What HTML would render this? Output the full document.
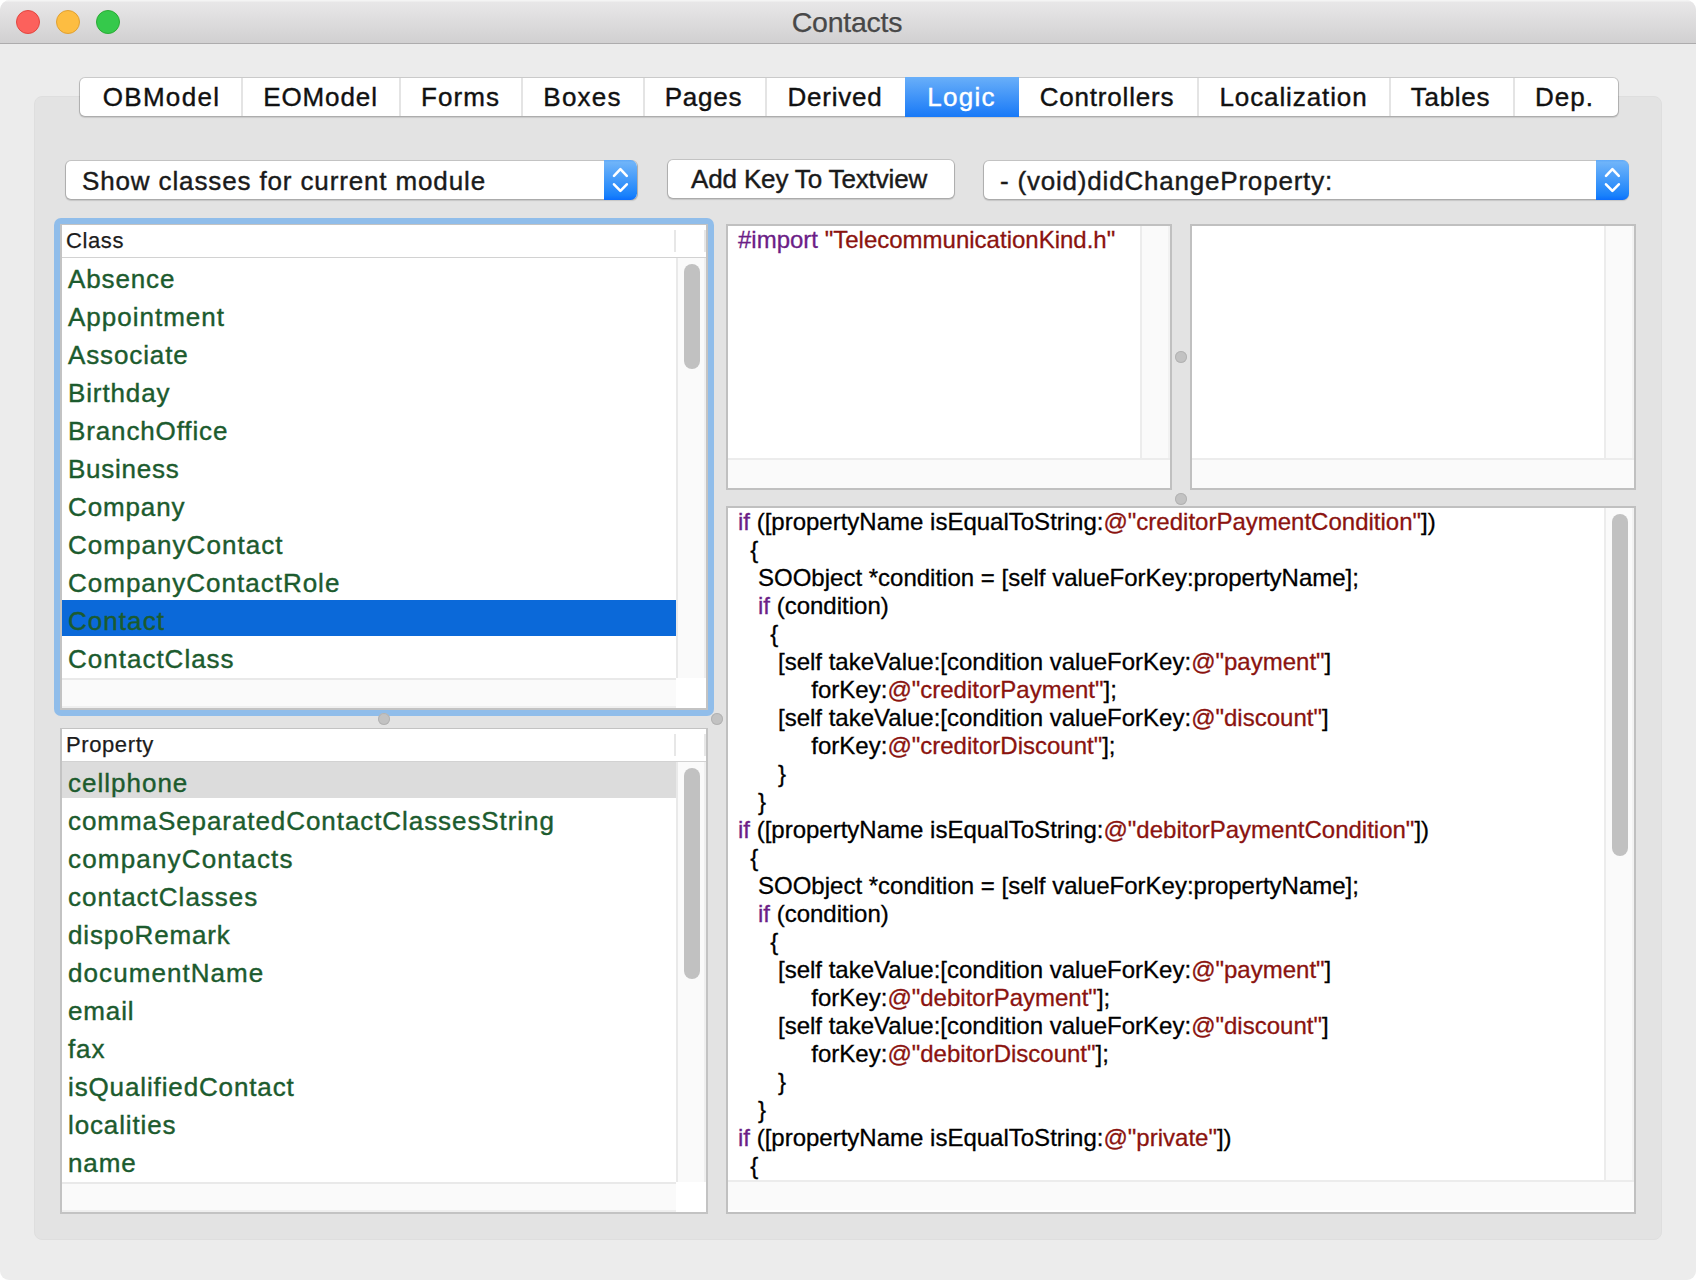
<!DOCTYPE html>
<html><head><meta charset="utf-8"><title>Contacts</title>
<style>
*{box-sizing:border-box;margin:0;padding:0}
html,body{width:1696px;height:1280px;overflow:hidden;background:#fff}
body{font-family:"Liberation Sans",sans-serif;position:relative;color:#000}
#win{position:absolute;left:0;top:0;width:1696px;height:1280px;background:#ececec;border-radius:10px 10px 9px 9px;overflow:hidden}
#titlebar{position:absolute;left:0;top:0;width:1696px;height:44px;background:linear-gradient(#f4f4f4 0,#f4f4f4 1px,#e8e7e8 2px,#d1d0d1 100%);border-bottom:1px solid #adacad}
#title{-webkit-text-stroke:.25px;position:absolute;left:0;width:1696px;top:7px;text-align:center;font-size:28.5px;line-height:30px;color:#484848;letter-spacing:-.25px;padding-right:2px}
.tl{position:absolute;top:10px;width:24px;height:24px;border-radius:50%}
#tabbox{position:absolute;left:34px;top:96px;width:1628px;height:1144px;background:#e3e3e3;border:1px solid #dedede;border-radius:8px}
#tabs{position:absolute;left:80px;top:78px;height:38px;width:1538px;background:#fff;border-radius:5px;box-shadow:0 0 0 1px rgba(0,0,0,.13),0 1px 1px 1px rgba(0,0,0,.12)}
.tab{-webkit-text-stroke:.4px;position:absolute;top:0;height:38px;font-size:26px;line-height:39px;text-align:center;white-space:pre;letter-spacing:.8px;color:#111;padding-right:3px}
.sep{position:absolute;top:0;width:2px;height:38px;background:#e4e4e4;margin-left:-1px}
.tab.sel{background:linear-gradient(#69aff9,#1879f7);color:#fff;top:-1px;height:40px;line-height:41px}
.popup{position:absolute;height:38px;-webkit-text-stroke:.4px;background:#fff;border-radius:5px;box-shadow:0 0 0 1px rgba(0,0,0,.13),0 1px 1px 1px rgba(0,0,0,.13);font-size:26px;line-height:40px;white-space:pre;letter-spacing:.8px;color:#1a1a1a}
.popup .cap{position:absolute;top:-1px;width:33px;height:40px;border-radius:0 6.5px 6.5px 0;background:linear-gradient(#5fa9f8,#6fb4f9 6%,#1a82fb 88%,#0b6efd)}
.popup .cap svg{position:absolute;left:0;top:0}
.ring{position:absolute;background:#90bdea;border-radius:7px}
.list{position:absolute;background:#fff;border:2px solid #c3c3c3;border-top:1px solid #c3c3c3;overflow:hidden}
.list .in{position:absolute;left:0;top:0;width:644px;height:483px}
.hdr{-webkit-text-stroke:.25px;position:absolute;left:4px;top:0;height:32px;font-size:22px;line-height:32px;white-space:pre;color:#1c1c1c;letter-spacing:.6px}
.hline{position:absolute;left:0;top:32px;width:644px;height:1px;background:#d2d2d2}
.hsep{position:absolute;top:5px;width:2px;height:22px;background:#e7e7e7}
.row{-webkit-text-stroke:.4px;position:absolute;left:0;width:614px;height:36px;font-size:26px;line-height:42px;color:#1c5b2e;white-space:pre;padding-left:6px;letter-spacing:.87px}
.vtrack{position:absolute;left:614px;top:33px;width:30px;height:420px;background:#fafafa;border-left:2px solid #e9e9e9;border-right:2px solid #efefef}
.htrack{position:absolute;left:0;top:453px;width:614px;height:30px;background:#fafafa;border-top:2px solid #e9e9e9;border-bottom:2px solid #efefef}
.thumb{position:absolute;background:#c1c1c1;border-radius:8px}
.code{-webkit-text-stroke:.3px;position:absolute;font-size:24px;line-height:28px;white-space:pre;color:#000}
.k{color:#6c1e87}.s{color:#8b130f}
.dimple{position:absolute;width:12px;height:12px;border-radius:50%;background:#c2c2c2;box-shadow:inset 0 0 0 1px #b3b3b3}
.tv{position:absolute;background:#fff;border:2px solid #c0c0c0;overflow:hidden}
</style></head><body>
<div id="win">
<div id="titlebar">
<div class="tl" style="left:16px;background:#fc615c;border:1px solid #e2463f"></div>
<div class="tl" style="left:56px;background:#fdbd41;border:1px solid #e0a032"></div>
<div class="tl" style="left:96px;background:#35c94b;border:1px solid #2bab35"></div>
<div id="title">Contacts</div>
</div>
<div id="tabbox"></div>
<div id="tabs">
<div class="tab" style="left:0px;width:162px;letter-spacing:1.3px;text-indent:4px">OBModel</div>
<div class="tab" style="left:162px;width:158px;letter-spacing:0.9px;text-indent:2px">EOModel</div>
<div class="tab" style="left:320px;width:122px;letter-spacing:1.05px;text-indent:2px">Forms</div>
<div class="tab" style="left:442px;width:122px;letter-spacing:1.2px;text-indent:2px">Boxes</div>
<div class="tab" style="left:564px;width:122px;letter-spacing:0.8px;text-indent:0px">Pages</div>
<div class="tab" style="left:686px;width:139px;letter-spacing:0.8px;text-indent:2px">Derived</div>
<div class="tab sel" style="left:825px;width:114px;letter-spacing:1.3px;text-indent:2px">Logic</div>
<div class="tab" style="left:939px;width:179px;letter-spacing:0.8px;text-indent:0px">Controllers</div>
<div class="tab" style="left:1118px;width:192px;letter-spacing:0.9px;text-indent:2px">Localization</div>
<div class="tab" style="left:1310px;width:124px;letter-spacing:0.7px;text-indent:0px">Tables</div>
<div class="tab" style="left:1434px;width:104px;letter-spacing:1.0px;text-indent:0px">Dep.</div>
<div class="sep" style="left:162px"></div>
<div class="sep" style="left:320px"></div>
<div class="sep" style="left:442px"></div>
<div class="sep" style="left:564px"></div>
<div class="sep" style="left:686px"></div>
<div class="sep" style="left:1118px"></div>
<div class="sep" style="left:1310px"></div>
<div class="sep" style="left:1434px"></div>
</div>
<div class="popup" style="left:66px;top:161px;width:571px;padding-left:16px;letter-spacing:.865px">Show classes for current module<div class="cap" style="right:0"><svg width="34" height="40" viewBox="0 0 34 40"><path d="M10 15.8 L16.4 9.2 L22.8 15.8 M10 24.3 L16.4 30.9 L22.8 24.3" fill="none" stroke="#fff" stroke-width="2.6" stroke-linecap="round" stroke-linejoin="round"/></svg></div></div>
<div class="popup" style="left:668px;top:160px;width:286px;line-height:38px;letter-spacing:-.15px;padding-left:23px">Add Key To Textview</div>
<div class="popup" style="left:984px;top:161px;width:644px;padding-left:16px">- (void)didChangeProperty:<div class="cap" style="right:-1px"><svg width="34" height="40" viewBox="0 0 34 40"><path d="M10 15.8 L16.4 9.2 L22.8 15.8 M10 24.3 L16.4 30.9 L22.8 24.3" fill="none" stroke="#fff" stroke-width="2.6" stroke-linecap="round" stroke-linejoin="round"/></svg></div></div>
<div class="ring" style="left:54px;top:218px;width:660px;height:498px"></div>
<div class="list" style="left:60px;top:224px;width:648px;height:486px"><div class="in">
<div class="hdr">Class</div><div class="hsep" style="left:612px"></div><div class="hsep" style="left:642px"></div><div class="hline"></div>
<div class="row" style="top:33px">Absence</div>
<div class="row" style="top:71px;letter-spacing:1.0px">Appointment</div>
<div class="row" style="top:109px">Associate</div>
<div class="row" style="top:147px">Birthday</div>
<div class="row" style="top:185px">BranchOffice</div>
<div class="row" style="top:223px;letter-spacing:0.75px">Business</div>
<div class="row" style="top:261px">Company</div>
<div class="row" style="top:299px;letter-spacing:1.05px">CompanyContact</div>
<div class="row" style="top:337px;letter-spacing:1.0px">CompanyContactRole</div>
<div class="row" style="top:375px;background:#0b69d9;letter-spacing:1.05px">Contact</div>
<div class="row" style="top:413px;letter-spacing:1.0px">ContactClass</div>
<div class="vtrack"><div class="thumb" style="left:6px;top:6px;width:16px;height:105px"></div></div><div class="htrack"></div>
</div></div>
<div class="list" style="left:60px;top:728px;width:648px;height:486px"><div class="in">
<div class="hdr">Property</div><div class="hsep" style="left:612px"></div><div class="hsep" style="left:642px"></div><div class="hline"></div>
<div class="row" style="top:33px;background:#dcdcdc;letter-spacing:1.0px">cellphone</div>
<div class="row" style="top:71px;letter-spacing:0.93px">commaSeparatedContactClassesString</div>
<div class="row" style="top:109px;letter-spacing:1.17px">companyContacts</div>
<div class="row" style="top:147px;letter-spacing:1.0px">contactClasses</div>
<div class="row" style="top:185px">dispoRemark</div>
<div class="row" style="top:223px;letter-spacing:1.07px">documentName</div>
<div class="row" style="top:261px">email</div>
<div class="row" style="top:299px">fax</div>
<div class="row" style="top:337px">isQualifiedContact</div>
<div class="row" style="top:375px">localities</div>
<div class="row" style="top:413px">name</div>
<div class="vtrack"><div class="thumb" style="left:6px;top:6px;width:16px;height:211px"></div></div><div class="htrack"></div>
</div></div>
<div class="dimple" style="left:378px;top:713px"></div>
<div class="dimple" style="left:711px;top:713px"></div>
<div class="dimple" style="left:1175px;top:351px"></div>
<div class="dimple" style="left:1175px;top:493px"></div>
<div class="tv" style="left:726px;top:224px;width:446px;height:266px"><div class="code" style="left:10px;top:0px"><span class="k">#import</span> <span class="s">"TelecommunicationKind.h"</span></div><div style="position:absolute;left:412px;top:0;width:30px;height:232px;background:#fafafa;border-left:2px solid #ececec;border-right:2px solid #f2f2f2"></div><div style="position:absolute;left:0;top:232px;width:442px;height:30px;background:#fafafa;border-top:2px solid #ececec"></div>
</div>
<div class="tv" style="left:1190px;top:224px;width:446px;height:266px"><div style="position:absolute;left:412px;top:0;width:30px;height:232px;background:#fafafa;border-left:2px solid #ececec;border-right:2px solid #f2f2f2"></div><div style="position:absolute;left:0;top:232px;width:442px;height:30px;background:#fafafa;border-top:2px solid #ececec"></div>
</div>
<div class="tv" style="left:726px;top:506px;width:910px;height:708px"><div class="code" style="left:10px;top:0px"><span class="k">if</span> ([propertyName isEqualToString:<span class="s">@"creditorPaymentCondition"</span>])</div>
<div class="code" style="left:9px;top:28px">  {</div>
<div class="code" style="left:10px;top:56px">   SOObject *condition = [self valueForKey:propertyName];</div>
<div class="code" style="left:10px;top:84px">   <span class="k">if</span> (condition)</div>
<div class="code" style="left:9px;top:112px">     {</div>
<div class="code" style="left:10px;top:140px">      [self takeValue:[condition valueForKey:<span class="s">@"payment"</span>]</div>
<div class="code" style="left:10px;top:168px">           forKey:<span class="s">@"creditorPayment"</span>];</div>
<div class="code" style="left:10px;top:196px">      [self takeValue:[condition valueForKey:<span class="s">@"discount"</span>]</div>
<div class="code" style="left:10px;top:224px">           forKey:<span class="s">@"creditorDiscount"</span>];</div>
<div class="code" style="left:10px;top:252px">      }</div>
<div class="code" style="left:10px;top:280px">   }</div>
<div class="code" style="left:10px;top:308px"><span class="k">if</span> ([propertyName isEqualToString:<span class="s">@"debitorPaymentCondition"</span>])</div>
<div class="code" style="left:9px;top:336px">  {</div>
<div class="code" style="left:10px;top:364px">   SOObject *condition = [self valueForKey:propertyName];</div>
<div class="code" style="left:10px;top:392px">   <span class="k">if</span> (condition)</div>
<div class="code" style="left:9px;top:420px">     {</div>
<div class="code" style="left:10px;top:448px">      [self takeValue:[condition valueForKey:<span class="s">@"payment"</span>]</div>
<div class="code" style="left:10px;top:476px">           forKey:<span class="s">@"debitorPayment"</span>];</div>
<div class="code" style="left:10px;top:504px">      [self takeValue:[condition valueForKey:<span class="s">@"discount"</span>]</div>
<div class="code" style="left:10px;top:532px">           forKey:<span class="s">@"debitorDiscount"</span>];</div>
<div class="code" style="left:10px;top:560px">      }</div>
<div class="code" style="left:10px;top:588px">   }</div>
<div class="code" style="left:10px;top:616px"><span class="k">if</span> ([propertyName isEqualToString:<span class="s">@"private"</span>])</div>
<div class="code" style="left:9px;top:644px">  {</div><div style="position:absolute;left:876px;top:0;width:30px;height:672px;background:#fafafa;border-left:2px solid #ececec;border-right:2px solid #f2f2f2"></div><div style="position:absolute;left:0;top:672px;width:906px;height:30px;background:#fafafa;border-top:2px solid #ececec"></div>
<div class="thumb" style="left:884px;top:6px;width:16px;height:342px"></div></div>
</div>
</body></html>
